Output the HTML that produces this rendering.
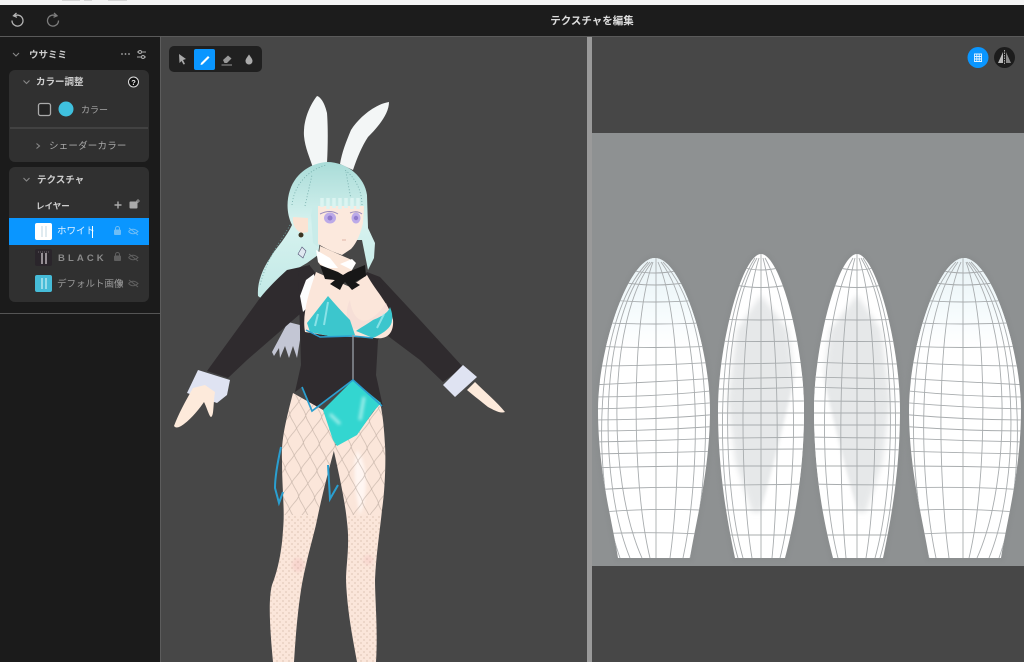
<!DOCTYPE html>
<html lang="ja">
<head>
<meta charset="utf-8">
<title>テクスチャを編集</title>
<style>
html,body{margin:0;padding:0;width:1024px;height:662px;overflow:hidden;background:#474747}
body{position:relative;font-family:"Liberation Sans","Noto Sans CJK JP",sans-serif;color:#bbb;filter:blur(.35px)}
#top{position:absolute;left:0;top:0;width:1024px;height:5px;background:#f4f4f4}
#bar{position:absolute;left:0;top:5px;width:1024px;height:31px;background:#1c1c1c;border-bottom:1px solid #5a5a5a}
#side{position:absolute;left:0;top:37px;width:160px;height:625px;background:#1b1b1b;border-right:1px solid #5c5c5c}
#hr{position:absolute;left:0;top:313px;width:160px;height:1px;background:#555}
.panel{position:absolute;left:9px;width:140px;background:#303030;border-radius:6px}
#sel{position:absolute;left:9px;top:218px;width:140px;height:27px;background:#0a96ff}
#tools{position:absolute;left:169px;top:46px;width:93px;height:26px;background:#202020;border-radius:5px}
#active{position:absolute;left:194px;top:49px;width:21px;height:21px;background:#0a96ff;border-radius:2px}
#split{position:absolute;left:587px;top:37px;width:5px;height:625px;background:#9a9a9a}
#tex{position:absolute;left:592px;top:133px;width:432px;height:433px;background:#8e9192}
.t{position:absolute;white-space:nowrap;line-height:14px;font-size:9.5px}
.b{font-weight:700;color:#cfcfcf}
svg{position:absolute;left:0;top:0}
#thumb1,#thumb2,#thumb3{position:absolute;left:35px;width:17px;height:17px;border-radius:2px}
#thumb1{top:223px;background:#fff}
#thumb2{top:249px;background:#2a252b}
#thumb3{top:275px;background:#46bcd8}
#caret{position:absolute;left:92px;top:226px;width:1px;height:12px;background:#fff}
</style>
</head>
<body>
<div id="top"></div>
<div id="bar"></div>
<div id="side"></div>
<div class="panel" style="top:70px;height:92px"></div>
<div class="panel" style="top:167px;height:135px"></div>
<div id="sel"></div>
<div id="hr"></div>
<div id="tools"></div>
<div id="active"></div>
<div id="split"></div>
<div id="tex"></div>
<div id="thumb1"></div>
<div id="thumb2"></div>
<div id="thumb3"></div>

<svg width="1024" height="662" viewBox="0 0 1024 662" fill="none">
<defs>
<clipPath id="c1"><path d="M618 558C612 520 598 470 598 410C598 350 628 258 655 258C682 258 710 350 710 410C710 470 696 520 690 558Z"/></clipPath>
<clipPath id="c2"><path d="M735 558C727 520 718 470 718 410C718 345 742 254 761 254C780 254 804 345 804 410C804 470 795 520 785 558Z"/></clipPath>
<linearGradient id="tipg" x1="0" y1="0" x2="0" y2="1"><stop offset="0" stop-color="#e8f2f5"/><stop offset=".5" stop-color="#f3fafc"/><stop offset="1" stop-color="#fff"/></linearGradient>
<linearGradient id="hairg" x1="0" y1="0" x2="0" y2="1"><stop offset="0" stop-color="#a9dcd8"/><stop offset=".45" stop-color="#d6f2ef"/><stop offset="1" stop-color="#c2e9e6"/></linearGradient>
<filter id="bl" x="-30%" y="-30%" width="160%" height="160%"><feGaussianBlur stdDeviation="3"/></filter>
<filter id="bl2" x="-30%" y="-30%" width="160%" height="160%"><feGaussianBlur stdDeviation="1.5"/></filter>
<pattern id="net" width="16" height="27" patternUnits="userSpaceOnUse" patternTransform="translate(283 400) rotate(5)">
<path d="M0 0C3 6 7 9 8 13.500C9 9 13 6 16 0M0 27C3 21 7 18 8 13.500C9 18 13 21 16 27" stroke="#a08f85" stroke-width=".7" opacity=".55"/>
</pattern>
<pattern id="dots" width="6" height="6" patternUnits="userSpaceOnUse">
<path d="M1 0V2M4 3V5" stroke="#b08f80" stroke-width=".7" opacity=".55"/>
</pattern>
<clipPath id="legs"><path d="M293 393C286 420 281 440 282 460C282 490 285 510 283 530C282 550 278 570 272 585C268 600 270 630 273 662H294C296 630 298 610 301 590C306 560 314 535 317 520C322 495 330 465 336 443L323 410ZM333 447C338 470 345 500 347 522C350 545 346 565 346 580C347 610 353 640 357 662H376C378 630 375 600 375 580C376 555 380 530 382 510C385 490 386 460 385 445C384 425 382 410 380 403L360 430Z"/></clipPath>

<g id="ear1">
<path d="M618 558C612 520 598 470 598 410C598 350 628 258 655 258C682 258 710 350 710 410C710 470 696 520 690 558Z" stroke="#858889" stroke-width="7" opacity=".35" filter="url(#bl2)"/>
<path d="M618 558C612 520 598 470 598 410C598 350 628 258 655 258C682 258 710 350 710 410C710 470 696 520 690 558Z" fill="#fff"/>
<g clip-path="url(#c1)">
<rect x="595" y="258" width="120" height="90" fill="url(#tipg)"/>
<path stroke="#a8acae" stroke-width=".9" d="M630 270Q655 276 680 270M620 282Q655 288 690 282M590 298Q655 306 720 298M590 322Q655 326 720 322M590 346Q655 349 720 346M590 366Q655 366 720 362M590 385Q655 382 720 378M590 397Q655 397 720 390M590 409Q655 408 720 402M590 420Q655 420 720 414M590 431Q655 431 720 426M590 442Q655 441 720 438M590 454Q655 453 720 451M590 468Q655 466 720 466M590 490Q655 486 720 488M590 513Q655 507 720 511M590 534Q655 531 720 535"/>
<path stroke="#a8acae" stroke-width=".9" d="M648 262C592 320 592 480 620 558M650 262C598 320 598 480 630 558M652 262C607 320 607 480 642 558M653 262C631 320 631 480 650 558M656 258V558M658 262C684 320 681 480 670 558M661 262C705 320 700 480 683 558M663 262C718 320 711 480 690 558"/>
</g>
</g>

<g id="ear2">
<path d="M735 558C727 520 718 470 718 410C718 345 742 254 761 254C780 254 804 345 804 410C804 470 795 520 785 558Z" stroke="#858889" stroke-width="7" opacity=".35" filter="url(#bl2)"/>
<path d="M735 558C727 520 718 470 718 410C718 345 742 254 761 254C780 254 804 345 804 410C804 470 795 520 785 558Z" fill="#fff"/>
<g clip-path="url(#c2)">
<path d="M761 295L737 330L728 400L735 460L752 512H761L785 440L795 385L788 330Z" fill="#e6e8e9" filter="url(#bl)"/>
<path d="M797 370L761 514L800 490L815 380Z" fill="#fff" filter="url(#bl2)" opacity=".95"/>
<path stroke="#a8acae" stroke-width=".9" d="M745 268Q761 272 778 268M735 285Q761 290 788 285M710 319Q761 321 810 319M710 341Q761 342 810 341M710 364Q761 364 810 362M710 379Q761 378 810 377M710 389Q761 389 810 387M710 402Q761 401 810 401M710 413Q761 413 810 413M710 425Q761 425 810 425M710 438Q761 438 810 437M710 450Q761 449 810 449M710 466Q761 466 810 466M710 485Q761 485 810 484M710 510Q761 510 810 510M710 535Q761 535 810 535"/>
<path stroke="#a8acae" stroke-width=".9" d="M755 258C715 320 715 480 738 558M757 258C720 320 721 480 743 558M759 258C739 320 739 480 752 558M761 254V558M763 258C780 320 780 480 772 558M765 258C800 320 800 480 780 558"/>
</g>
</g>
</defs>

<!-- top-strip faint text -->
<path d="M62 0H80M84 0H92M108 0H127" stroke="#c4c4c4" stroke-width="1.200"/>

<!-- undo / redo -->
<g stroke="#b5b5b5" stroke-width="1.300" fill="none">
<path d="M14.500 16A5.500 5.500 0 1 1 12 20.500"/>
<path d="M16.500 13L13.500 15.800L17 17.300"/>
</g>
<g stroke="#7d7d7d" stroke-width="1.300" fill="none" transform="translate(70.500 0) scale(-1 1)">
<path d="M14.500 16A5.500 5.500 0 1 1 12 20.500"/>
<path d="M16.500 13L13.500 15.800L17 17.300"/>
</g>

<!-- sidebar header icons -->
<path d="M13 53L16 56L19 53" stroke="#888" stroke-width="1.100"/>
<circle cx="122" cy="54" r=".9" fill="#aaa"/><circle cx="125.500" cy="54" r=".9" fill="#aaa"/><circle cx="129" cy="54" r=".9" fill="#aaa"/>
<path d="M137 52H146M137 57H146" stroke="#aaa" stroke-width="1"/>
<circle cx="140" cy="52" r="1.500" fill="#1b1b1b" stroke="#aaa"/><circle cx="143" cy="57" r="1.500" fill="#1b1b1b" stroke="#aaa"/>

<!-- colour panel -->
<path d="M23.500 80.500L26.500 83.500L29.500 80.500" stroke="#888" stroke-width="1.100"/>
<circle cx="133.500" cy="82" r="5" fill="#111" stroke="#ddd" stroke-width="1"/>
<text x="133.500" y="85" text-anchor="middle" font-size="7.500" font-weight="700" fill="#eee" font-family="Liberation Sans, sans-serif">?</text>
<rect x="38.500" y="103.500" width="12" height="12" rx="2" fill="#232323" stroke="#aaa" stroke-width="1.300"/>
<circle cx="66" cy="109" r="7.500" fill="#3fc0de"/>
<path d="M10 128H148" stroke="#555" stroke-width="1"/>
<path d="M36.500 143.500L39.500 146L36.500 148.500" stroke="#888" stroke-width="1.100"/>

<!-- texture panel icons -->
<path d="M23.500 178L26.500 181L29.500 178" stroke="#888" stroke-width="1.100"/>
<path d="M118 201.500V208.500M114.500 205H121.500" stroke="#aaa" stroke-width="1.400"/>
<rect x="129.500" y="201.500" width="8" height="7" rx="1" fill="#aaa"/>
<path d="M138 199V203M136 201H140" stroke="#aaa" stroke-width=".8"/>

<!-- thumbs detail -->
<path d="M42 226V237M46 226V237" stroke="#cfe0e8" stroke-width="1.300"/>
<path d="M42 253V264M46 253V264" stroke="#cfc8cc" stroke-width="1.300"/>
<path d="M38 252H50" stroke="#6e666c" stroke-width="1" stroke-dasharray="1 1"/>
<path d="M42 278V289M46 278V289" stroke="#c4eef4" stroke-width="1.300"/>

<!-- lock / eye-off -->
<g stroke="#6fbdf5" stroke-width="1" fill="none">
<path d="M115.500 230V228.500A1.800 1.800 0 0 1 119.500 228.500V230"/><rect x="114.500" y="230" width="6" height="4.500" rx=".8" fill="#6fbdf5"/>
<path d="M128.500 231.500Q133 227 138 231.500Q133 236 128.500 231.500M129 228L138 235"/>
</g>
<g stroke="#5f5f5f" stroke-width="1" fill="none">
<path d="M115.500 256V254.500A1.800 1.800 0 0 1 119.500 254.500V256"/><rect x="114.500" y="256" width="6" height="4.500" rx=".8" fill="#5f5f5f"/>
<path d="M128.500 257.500Q133 253 138 257.500Q133 262 128.500 257.500M129 254L138 261"/>
<path d="M128.500 283.500Q133 279 138 283.500Q133 288 128.500 283.500M129 280L138 287"/>
</g>
<rect x="118" y="281" width="5" height="5" rx="1" fill="#5f5f5f"/>

<!-- tools -->
<path d="M179 54L186 59L183 60L185 64L183.500 64.500L181.500 61L179.500 63Z" fill="#aaa"/>
<path d="M201 63L208 56L209.500 57.500L202.500 64.500L200.500 65Z" fill="#fff"/>
<path d="M223 60L228 55.500L231.500 58.500L227 63H224.500Z" fill="#999"/>
<path d="M221.500 65H232" stroke="#999" stroke-width="1"/>
<path d="M249 54.500C247 57.500 245.500 59 245.500 61A3.500 3.500 0 0 0 252.500 61C252.500 59 251 57.500 249 54.500Z" fill="#aaa"/>

<!-- top-right buttons -->
<circle cx="978" cy="57.500" r="10.500" fill="#0a96ff"/>
<path d="M974.500 54H981.500V61.500H974.500ZM974.500 56.500H981.500M974.500 59H981.500M976.800 54V61.500M979.200 54V61.500" stroke="#e6f4ff" stroke-width=".9"/>
<circle cx="1004.500" cy="57.500" r="10.500" fill="#1c1c1c"/>
<path d="M1003 52L998 63H1003Z" fill="#bbb"/><path d="M1006 52L1011 63H1006Z" fill="#888"/>
<path d="M1004.500 50V65" stroke="#ddd" stroke-width=".7" stroke-dasharray="1.500 1"/>

<!-- UV ears -->
<use href="#ear1"/>
<use href="#ear2"/>
<use href="#ear2" transform="translate(1618 0) scale(-1 1)"/>
<use href="#ear1" transform="translate(1619 0) scale(-1 1)"/>

<!-- CHARACTER -->
<!-- bunny ears -->
<path d="M317 96C309 106 303 122 304 136C305 148 310 158 313 168L327 163C328 145 328 125 327 113C325 104 321 97 317 96Z" fill="#f3f6f6"/>
<path d="M389 102C376 104 360 116 351 130C346 142 342 152 340 164L353 170C357 158 362 146 368 137C378 127 389 114 389 102Z" fill="#f3f6f6"/>

<!-- back hair strand -->
<path d="M288 322L272 352L274 356L279 348L280 358L285 346L289 358L293 346L297 358L300 340L300 325Z" fill="#c3c6d4"/>

<!-- hair -->
<path d="M327 162C312 163 296 172 290 190C286 202 287 215 292 225C286 238 276 248 270 258C262 270 257 283 258 296L262 299C270 289 282 280 295 270L307 263L318 255L320 240L362 240L368 270L374 258L375 243L368 228L367 195C365 178 348 162 327 162Z" fill="url(#hairg)"/>
<path d="M292 205C294 185 308 170 326 165M305 206L312 175M352 205L346 172M362 205C362 192 356 178 345 170M290 225C282 240 268 255 260 285" stroke="#6fa9a7" stroke-width=".8" stroke-dasharray="1 2"/>

<!-- face -->
<path d="M317 206H364L363 223C361 232 357 243 351 249L342 255C333 252 322 247 317 243Z" fill="#fce9dd"/>
<path d="M313 206L311 215L313 243L318 247L318 206Z" fill="#c9ece9"/>
<path d="M293 217C292 224 296 232 303 233L308 232V218Z" fill="#fbe3d3"/>
<path d="M322 207V198M328 209V198M334 208V198M340 209V198M346 208V198M352 209V198M358 209V198" stroke="#dcf4f1" stroke-width="3.500"/>
<ellipse cx="330" cy="218" rx="6" ry="5.500" fill="#bcaae8"/>
<ellipse cx="356" cy="218" rx="4.500" ry="5.500" fill="#bcaae8"/>
<circle cx="330" cy="218" r="2.500" fill="#8f7acc"/><circle cx="356" cy="218" r="2.200" fill="#8f7acc"/>
<path d="M320 214Q330 209 338 214M350 213Q357 210 362 214" stroke="#9a8bbd" stroke-width="1"/>
<path d="M342 240H346" stroke="#d9a89a" stroke-width=".8"/>
<!-- earring -->
<circle cx="301" cy="235" r="2.500" fill="#3a3320"/>
<path d="M302 247L306 251L303 258L298 254Z" fill="#dfe8f0" stroke="#557" stroke-width=".6"/>

<!-- neck / collar -->
<path d="M320 246L345 257L352 260V275L330 278L318 262Z" fill="#fbe6d8"/>
<path d="M316 250L330 258L338 268L326 268L318 262ZM340 264L352 259L356 263L352 270Z" fill="#fff"/>

<!-- arms -->
<path d="M310 265L287 270C278 278 268 288 260 298L207 371L228 378L247 360L300 314Z" fill="#2f2b2e"/>
<path d="M367 272L380 277L420 320L463 367L443 382L420 360L380 330Z" fill="#2f2b2e"/>

<!-- torso jacket -->
<path d="M298 272L310 266L318 276L352 290L367 272L382 285L393 317L378 340L376 375L383 407L353 380L312 412L302 387L295 392L301 365L300 330Z" fill="#2f2b2e"/>
<path d="M300 296L306 280L314 274L318 296L303 312Z" fill="#fdfdfd"/>

<!-- chest -->
<path d="M316 272L350 287L367 275C375 290 390 305 393 320C394 332 388 340 375 338L330 336L305 332C302 315 308 295 316 272Z" fill="#fbe6da"/>
<path d="M350 300C352 318 362 325 372 318C380 312 384 306 386 303L390 312C378 325 362 332 352 328C346 322 345 310 350 300Z" fill="#f3dcd6" opacity=".7"/>
<!-- bikini -->
<path d="M328 296L307 323L310 332L333 337L355 335L350 320C342 312 335 304 328 296Z" fill="#3cc6cd"/>
<path d="M390 307C388 314 378 318 373 320C366 325 360 328 356 331L373 338C382 334 392 328 392 320C393 314 391 310 390 307Z" fill="#3cc6cd"/>
<path d="M328 302L324 325M318 314L315 326M384 314L377 328" stroke="#a9eef2" stroke-width="2" opacity=".7"/>
<path d="M306 330L320 337L353 336L373 338" stroke="#2a9fd0" stroke-width="1.400"/>
<path d="M353 335V380" stroke="#9aa0a8" stroke-width="1.300"/>

<!-- bow -->
<path d="M320 265L338 272L343 275L348 272L365 265L366 276L355 282L360 285L352 290L345 282L343 284L340 290L330 284L335 280L325 279Z" fill="#171717"/>

<!-- legs -->
<path d="M293 393C286 420 281 440 282 460C282 490 285 510 283 530C282 550 278 570 272 585C268 600 270 630 273 662H294C296 630 298 610 301 590C306 560 314 535 317 520C322 495 330 465 336 443L323 410Z" fill="#fbe6da"/>
<path d="M333 447C338 470 345 500 347 522C350 545 346 565 346 580C347 610 353 640 357 662H376C378 630 375 600 375 580C376 555 380 530 382 510C385 490 386 460 385 445C384 425 382 410 380 403L360 430Z" fill="#fbe6da"/>
<path d="M357 450C366 460 370 490 360 515C355 490 352 470 357 450Z" fill="#fff6f2" filter="url(#bl2)"/>
<ellipse cx="298" cy="565" rx="6" ry="7" fill="#f6cfc9" opacity=".7" filter="url(#bl2)"/>
<ellipse cx="368" cy="560" rx="5" ry="5" fill="#f6cfc9" opacity=".6" filter="url(#bl2)"/>
<g clip-path="url(#legs)">
<rect x="260" y="395" width="135" height="120" fill="url(#net)"/>
<rect x="260" y="515" width="135" height="147" fill="url(#dots)"/>
</g>

<!-- blue tails -->
<path d="M281 447C277 465 275 480 275 488L279 503L283 492" stroke="#2a9fd0" stroke-width="2" fill="none"/>
<path d="M328 465L330 499L338 485" stroke="#2a9fd0" stroke-width="2" fill="none"/>

<!-- leotard -->
<path d="M353 380L381 403L373 412L357 435L337 446L333 440L323 410Z" fill="#33d6d0"/>
<path d="M330 414L340 424M364 397L360 420" stroke="#a8f0ec" stroke-width="3" fill="none" filter="url(#bl2)"/>
<path d="M302 387L312 411L353 380L382 406" stroke="#2a9fd0" stroke-width="1.700" fill="none"/>

<!-- left cuff + hand -->
<path d="M198 370L230 380L227 395L217 403L187 393Z" fill="#dfe3f2"/>
<path d="M193 388C186 400 178 415 174 426C176 429 180 427 184 424C192 418 200 408 204 402C207 408 209 416 211 417C214 416 213 405 215 392L205 385Z" fill="#fdeadb"/>
<!-- right cuff + hand -->
<path d="M463 365L477 377L455 397L443 385Z" fill="#dfe3f2"/>
<path d="M467 390L475 382C485 392 497 402 505 412C500 414 494 410 488 407C482 402 474 396 467 390Z" fill="#fdeadb"/>
</svg>

<div class="t b" style="left:510px;top:14px;width:164px;text-align:center;font-size:10.500px;color:#ddd">テクスチャを編集</div>
<div class="t b" style="left:29px;top:49px;font-size:9.500px">ウサミミ</div>
<div class="t b" style="left:36px;top:76px;font-size:9.500px">カラー調整</div>
<div class="t" style="left:81px;top:103px;font-size:9px;color:#a8a8a8">カラー</div>
<div class="t" style="left:49px;top:140px;font-size:9.500px;color:#a8a8a8;letter-spacing:.2px">シェーダーカラー</div>
<div class="t b" style="left:37px;top:174px;font-size:9.500px">テクスチャ</div>
<div class="t b" style="left:36px;top:199px;font-size:8.500px">レイヤー</div>
<div class="t" style="left:57px;top:225px;font-size:9.500px;color:#dff0ff">ホワイト</div>
<div id="caret"></div>
<div class="t" style="left:58px;top:252px;font-size:9.500px;font-weight:700;letter-spacing:3.100px;color:#8a8a8a">BLACK</div>
<div class="t" style="left:57px;top:278px;font-size:9.500px;color:#9a9a9a">デフォルト画像</div>
</body>
</html>
